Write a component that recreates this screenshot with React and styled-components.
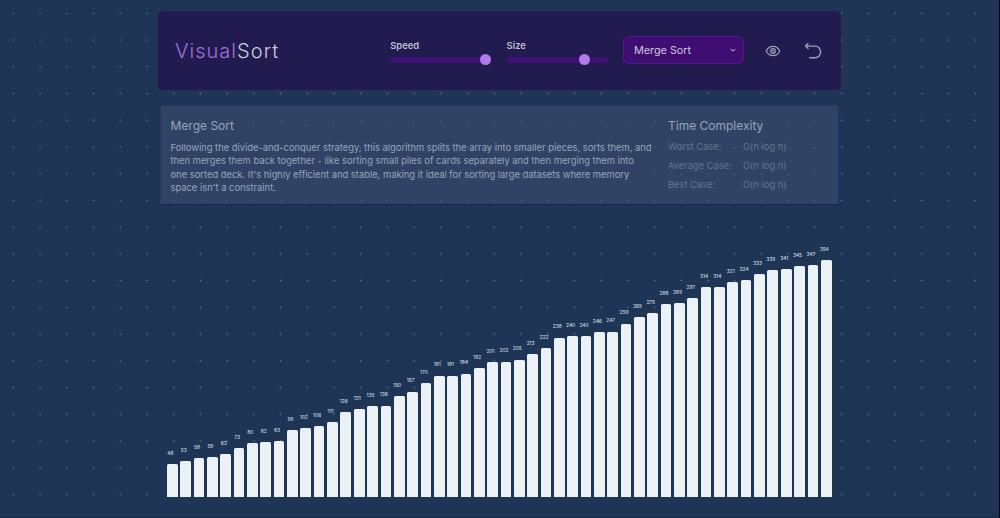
import React from "react";
import styled, { createGlobalStyle } from "styled-components";

const GlobalStyle = createGlobalStyle`
  * { box-sizing: border-box; }
  body { margin: 0; font-family: Inter, "Liberation Sans", sans-serif; background: #1e3555; }
`;

const Page = styled.div`
  width: 1000px;
  height: 518px;
  display: flex;
  flex-direction: column;
  align-items: center;
  padding-top: 11px;
  overflow: hidden;
  border-right: 1px solid #04070b;
  border-bottom: 1px solid #192b47;
  background: radial-gradient(circle at center, #66788d 0.65px, transparent 1.1px) 0 0 / 26.73px 26.73px #1e3555;
`;

const Header = styled.header`
  width: 683px;
  height: 79px;
  display: flex;
  align-items: center;
  padding: 0 18px 0 16px;
  border-radius: 4px;
  border: 1px solid #2b1758;
  background: #221b4f;
`;

const Logo = styled.h1`
  margin: 0 auto 0 0;
  font-size: 20px;
  line-height: 26px;
  font-weight: 300;
  letter-spacing: 1.03px;
  color: #c5cedb;
`;

const LogoAccent = styled.span`
  color: #a06fdc;
`;

const Control = styled.label`
  width: 101px;
  height: 24px;
  display: flex;
  flex-direction: column;
  justify-content: space-between;
  margin-right: ${(p) => p.$gap}px;
  font-size: 9.4px;
  line-height: 13px;
  font-weight: 600;
  color: #b9c2d2;
`;

const Track = styled.span`
  display: flex;
  align-items: center;
  height: 6px;
  border-radius: 3px;
  background: #401074;
  padding-left: ${(p) => p.$offset}px;
`;

const Thumb = styled.span`
  flex: none;
  width: 11px;
  height: 11px;
  border-radius: 50%;
  background: #b27bea;
`;

const Select = styled.button`
  width: 121px;
  height: 28px;
  display: flex;
  align-items: center;
  justify-content: space-between;
  margin: 0 20px 1px 0;
  padding: 0 7px 0 10px;
  border: 1px solid #4d1a86;
  border-radius: 5px;
  background: #400e73;
  color: #cbc6dc;
  font: 400 10.8px Inter, "Liberation Sans", sans-serif;
`;

const IconButton = styled.button`
  display: flex;
  width: 18px;
  height: 18px;
  margin: 0 ${(p) => p.$gap || 0}px 0 0;
  padding: 0;
  border: 0;
  background: none;
  color: #9aa3b8;
`;

const Info = styled.section`
  width: 679px;
  height: 100px;
  margin-top: 15px;
  display: flex;
  padding: 12px 10px 0 9.5px;
  border: 1px solid #32306a;
  border-bottom-color: #291b61;
  border-radius: 2px;
  background: radial-gradient(circle at center, #4d6080 0.6px, transparent 1.1px) -0.8px 1.4px / 26.73px 26.73px #314365;
  color: #97a5bb;
`;

const Description = styled.div`
  width: 497.5px;
`;

const Title = styled.h2`
  margin: 0 0 7px;
  font-size: 12px;
  line-height: 15px;
  font-weight: 400;
`;

const Text = styled.p`
  margin: 0;
  padding-top: 0.8px;
  font-size: 9.37px;
  line-height: 13.37px;
  white-space: nowrap;
`;

const Cases = styled.dl`
  display: grid;
  grid-template-columns: 75px auto;
  row-gap: 5.4px;
  margin: 0;
  font-size: 9.3px;
  line-height: 13.4px;
  color: #64748f;
`;

const Term = styled.dt``;
const Value = styled.dd`
  margin: 0;
`;

const Chart = styled.main`
  width: 665px;
  height: 291.5px;
  flex: none;
  display: flex;
  align-items: flex-end;
  justify-content: space-between;
`;

const Column = styled.div`
  width: 10.7px;
  display: flex;
  flex-direction: column;
  align-items: center;
`;

const Bar = styled.div`
  width: 100%;
  border-radius: 1.5px 1.5px 0 0;
  background: #ebf1f5;
`;

const BarLabel = styled.span`
  margin: 0 0 8.2px -4px;
  font-size: 4.8px;
  line-height: 6px;
  font-weight: 500;
  color: #d2dae4;
`;

const VALUES = [
  48, 53, 58, 59, 63, 73, 80, 82, 83, 99, 102, 106, 111, 126, 131, 135, 136,
  150, 157, 170, 181, 181, 184, 192, 201, 202, 205, 213, 222, 238, 240, 240,
  246, 247, 259, 269, 275, 288, 289, 297, 314, 314, 321, 324, 333, 339, 341,
  345, 347, 354,
];

const COMPLEXITY = [
  ["Worst Case:", "O(n log n)"],
  ["Average Case:", "O(n log n)"],
  ["Best Case:", "O(n log n)"],
];

function Slider({ label, offset, gap }) {
  return (
    <Control $gap={gap}>
      {label}
      <Track $offset={offset}>
        <Thumb />
      </Track>
    </Control>
  );
}

export default function App() {
  return (
    <>
      <GlobalStyle />
      <Page>
        <Header>
          <Logo>
            <LogoAccent>Visual</LogoAccent>Sort
          </Logo>
          <Slider label="Speed" offset={90} gap={15.4} />
          <Slider label="Size" offset={72} gap={15.4} />
          <Select>
            Merge Sort
            <svg width="6" height="6" viewBox="0 0 6 6" fill="none" stroke="currentColor">
              <path d="M0.8 2 3 4.2 5.2 2" />
            </svg>
          </Select>
          <IconButton aria-label="Show values" $gap={22}>
            <svg width="18" height="18" viewBox="0 0 18 18" fill="none" stroke="currentColor" strokeWidth="1.2">
              <path d="M2.2 9C3.6 6.2 6 4.3 9 4.3S14.4 6.2 15.8 9C14.4 11.8 12 13.7 9 13.7S3.6 11.8 2.2 9Z" />
              <circle cx="9" cy="9" r="2.3" />
              <circle cx="9" cy="9" r="0.4" />
            </svg>
          </IconButton>
          <IconButton aria-label="Reset">
            <svg width="18" height="18" viewBox="0 0 18 18" fill="none" stroke="currentColor" strokeWidth="1.4" strokeLinecap="round" strokeLinejoin="round">
              <path d="M4 1.6 1.5 4.1 4 6.6M1.5 4.1H11.3A5.3 5.8 0 0 1 11.3 15.7H5.7" />
            </svg>
          </IconButton>
        </Header>
        <Info>
          <Description>
            <Title>Merge Sort</Title>
            <Text>
              Following the divide-and-conquer strategy, this algorithm splits the array into smaller pieces, sorts them, and
              <br />
              then merges them back together - like sorting small piles of cards separately and then merging them into
              <br />
              one sorted deck. It's highly efficient and stable, making it ideal for sorting large datasets where memory
              <br />
              space isn't a constraint.
            </Text>
          </Description>
          <div>
            <Title>Time Complexity</Title>
            <Cases>
              {COMPLEXITY.map(([term, value]) => (
                <React.Fragment key={term}>
                  <Term>{term}</Term>
                  <Value>{value}</Value>
                </React.Fragment>
              ))}
            </Cases>
          </div>
        </Info>
        <Chart>
          {VALUES.map((value, i) => (
            <Column key={i}>
              <BarLabel>{value}</BarLabel>
              <Bar style={{ height: value * 0.668 }} />
            </Column>
          ))}
        </Chart>
      </Page>
    </>
  );
}
